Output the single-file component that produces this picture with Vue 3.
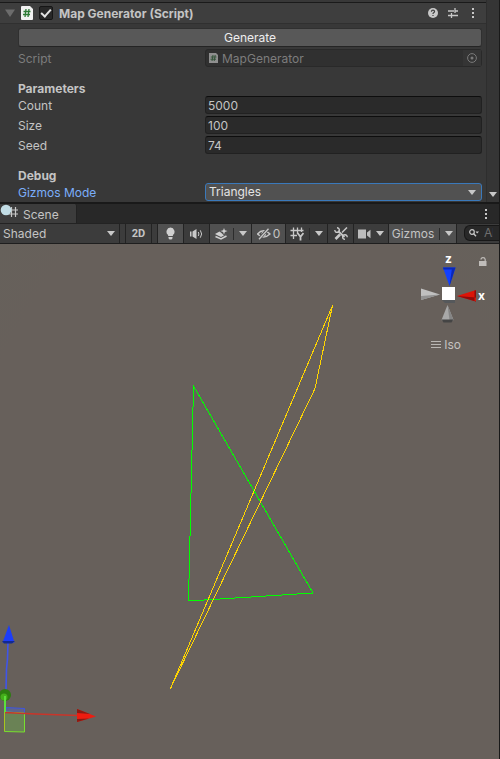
<script setup>
import { ref } from 'vue'

const enabled = ref(true)
const open = ref(true)
const gizmosMode = ref('Triangles')
const shading = ref('Shaded')
const search = ref('')
const fields = ref([
  { id: 'count', label: 'Count', value: '5000' },
  { id: 'size', label: 'Size', value: '100' },
  { id: 'seed', label: 'Seed', value: '74' },
])
</script>

<template>
  <div class="editor">
    <section class="inspector">
      <div class="panel">
        <header class="component-head">
          <button class="fold" aria-label="Toggle component" @click="open = !open">
            <svg width="10" height="8" viewBox="0 0 10 8"><path d="M0 0.5H10L5 8Z" fill="#6c6c6c" /></svg>
          </button>
          <svg class="file" width="12" height="14" viewBox="0 0 12 14">
            <path d="M1 0H9L12 3V13Q12 14 11 14H1Q0 14 0 13V1Q0 0 1 0Z" fill="#f1f1f1" />
            <path d="M5 3L4 11M8 3L7 11M2.5 5.5H9.5M2 8.5H9" stroke="#2d7a35" stroke-width="1.3" />
          </svg>
          <input id="enabled" v-model="enabled" class="check" type="checkbox" />
          <label class="title" for="enabled">Map Generator (Script)</label>
          <div class="head-actions">
            <button aria-label="Help">
              <svg width="10" height="10" viewBox="0 0 10 10">
                <circle cx="5" cy="5" r="5" fill="#c8c8c8" />
                <path d="M3.4 3.8Q3.5 2.2 5 2.2T6.6 3.6Q6.6 4.4 5.6 4.8Q5 5.1 5 6M5 6.9V8.1" fill="none" stroke="#3e3e3e" stroke-width="1.2" />
              </svg>
            </button>
            <button aria-label="Presets">
              <svg width="10" height="10" viewBox="0 0 10 10">
                <path d="M0 3H6M7 3H10M7 0V5M0 7.500H3M4 7.500H10M3.500 5V10" stroke="#c8c8c8" stroke-width="1.3" />
              </svg>
            </button>
            <button aria-label="Component menu">
              <svg width="10" height="10" viewBox="0 0 10 10"><path d="M4 0h2v2H4zM4 4h2v2H4zM4 8h2v2H4z" fill="#c8c8c8" /></svg>
            </button>
          </div>
        </header>

        <div v-if="open" class="props">
          <button class="generate">Generate</button>
          <div class="row muted">
            <span class="name">Script</span>
            <div class="object-field">
              <svg width="9" height="10" viewBox="0 0 9 10">
                <path d="M0 0H7L9 2V10H0Z" fill="#8f8f8f" />
                <path d="M4 2L3 8M6.2 2L5.2 8M1.8 4H7.4M1.5 6.2H7" stroke="#35543a" stroke-width="1" />
              </svg>
              <span class="name">MapGenerator</span>
              <button class="picker" aria-label="Select script">
                <svg width="10" height="10" viewBox="0 0 10 10">
                  <circle cx="5" cy="5" r="4.4" fill="none" stroke="#7a7a7a" />
                  <circle cx="5" cy="5" r="1.5" fill="#7a7a7a" />
                </svg>
              </button>
            </div>
          </div>

          <h2>Parameters</h2>
          <div v-for="f in fields" :key="f.id" class="row">
            <label class="name" :for="f.id">{{ f.label }}</label>
            <input :id="f.id" v-model="f.value" class="number" type="text" />
          </div>

          <h2>Debug</h2>
          <div class="row focused">
            <label class="name" for="mode">Gizmos Mode</label>
            <div class="mode-wrap">
              <select id="mode" v-model="gizmosMode"><option>Triangles</option></select>
              <svg width="8" height="5" viewBox="0 0 8 5"><path d="M0 0H8L4 5Z" fill="#c8c8c8" /></svg>
            </div>
          </div>
        </div>
      </div>
      <div class="scrollbar">
        <svg width="8" height="5" viewBox="0 0 8 5"><path d="M0 0H8L4 5Z" fill="#c8c8c8" /></svg>
      </div>
    </section>

    <nav class="tabs">
      <button class="tab">
        <svg width="18" height="14" viewBox="0 0 18 14">
          <path d="M11.500 3V13M15.500 3V13M8 6H18M8 10H18" stroke="#c8c8c8" stroke-width="1.2" />
          <circle cx="6" cy="6" r="5.3" fill="#c1dce5" />
        </svg>
        <span class="name">Scene</span>
      </button>
      <button class="tab-menu" aria-label="Tab menu">
        <svg width="2" height="10" viewBox="0 0 2 10"><path d="M0 0h2v2H0zM0 4h2v2H0zM0 8h2v2H0z" fill="#c8c8c8" /></svg>
      </button>
    </nav>

    <div class="toolbar">
      <div class="tool shade">
        <select v-model="shading" aria-label="Draw mode"><option>Shaded</option></select>
        <svg width="8" height="5" viewBox="0 0 8 5"><path d="M0 0H8L4 5Z" fill="#c8c8c8" /></svg>
      </div>
      <button class="tool two-d">2D</button>
      <button class="tool on light" aria-label="Scene lighting">
        <svg width="10" height="13" viewBox="0 0 10 13">
          <path d="M4.500 0.5A4.2 4.2 0 0 0 2.100 8V9H6.900V8A4.2 4.2 0 0 0 4.500 0.5Z M2.500 10H6.500V11Q6.500 12.5 4.500 12.5T2.500 11Z" fill="#d0d0d0" />
        </svg>
      </button>
      <button class="tool audio" aria-label="Scene audio">
        <svg width="13" height="12" viewBox="0 0 13 12">
          <path d="M0 3.5H1.5V8.5H0ZM2.5 3.5L6.5 1V11L2.5 8.5Z" fill="#c8c8c8" />
          <path d="M8.3 4Q9.5 6 8.3 8M10.3 2.3Q13 6 10.3 9.7" fill="none" stroke="#c8c8c8" />
        </svg>
      </button>
      <button class="tool on split effects" aria-label="Effects">
        <svg width="13" height="12" viewBox="0 0 13 12">
          <path d="M9 0L9.900 2.200L12.500 3L9.900 3.900L9 6.500L8.100 3.900L5.500 3L8.100 2.200Z" fill="#d0d0d0" />
          <path d="M0 6L4.500 3.500L7 5.500L9 7.500L11.500 6L6 9Z" fill="#d0d0d0" />
          <path d="M0.500 8.500L6 11L11.500 8" fill="none" stroke="#d0d0d0" stroke-width="1.500" />
        </svg>
        <i></i>
        <svg width="8" height="5" viewBox="0 0 8 5"><path d="M0 0H8L4 5Z" fill="#c8c8c8" /></svg>
      </button>
      <button class="tool on hidden-count" aria-label="Hidden objects">
        <svg width="14" height="12" viewBox="0 0 14 12">
          <path d="M0.5 6Q6.5 -0.5 13 6Q6.5 12 0.5 6Z" fill="none" stroke="#c8c8c8" stroke-width="1.4" />
          <circle cx="6.8" cy="6" r="2.4" fill="#c8c8c8" />
          <path d="M2 11L11.5 0.5" stroke="#505050" stroke-width="3" />
          <path d="M2 11.3L11.5 0.8" stroke="#c8c8c8" stroke-width="1.3" />
        </svg>
        <span>0</span>
      </button>
      <button class="tool split grid" aria-label="Grid">
        <svg width="14" height="14" viewBox="0 0 14 14">
          <path d="M3.500 0.5V12M7.500 0.5V7M11.500 0.500V5M0.5 3.5H13.500M0.5 8.500H7" stroke="#c8c8c8" stroke-width="1.3" />
          <path d="M7.500 6L10.500 9.800L13.500 6M10.500 9V13.500" fill="none" stroke="#c8c8c8" stroke-width="1.800" />
        </svg>
        <i></i>
        <svg width="8" height="5" viewBox="0 0 8 5"><path d="M0 0H8L4 5Z" fill="#c8c8c8" /></svg>
      </button>
      <button class="tool tools" aria-label="Component tools">
        <svg width="14" height="13" viewBox="0 0 14 13">
          <path d="M4 4L10.500 10" stroke="#c8c8c8" stroke-width="1.800" />
          <path d="M0.800 3A2.300 2.300 0 1 0 3 0.800M13.200 10.200A2.300 2.300 0 1 0 11 12.300" fill="none" stroke="#c8c8c8" stroke-width="1.400" />
          <path d="M13 0.500L8 5.500" stroke="#c8c8c8" stroke-width="1.500" />
          <path d="M6 7.500L1.500 12" stroke="#c8c8c8" stroke-width="2.600" />
        </svg>
      </button>
      <button class="tool camera" aria-label="Scene camera">
        <svg width="13" height="10" viewBox="0 0 13 10"><path d="M0 0.5H8V9.5H0ZM9 3.5L12.5 0.8V9.2L9 6.5Z" fill="#bdbdbd" /></svg>
        <svg width="8" height="5" viewBox="0 0 8 5"><path d="M0 0H8L4 5Z" fill="#c8c8c8" /></svg>
      </button>
      <button class="tool on split gizmos">
        <span>Gizmos</span>
        <i></i>
        <svg width="8" height="5" viewBox="0 0 8 5"><path d="M0 0H8L4 5Z" fill="#c8c8c8" /></svg>
      </button>
      <label class="search">
        <svg width="10" height="8" viewBox="0 0 10 8">
          <circle cx="3" cy="3" r="2.3" fill="none" stroke="#c8c8c8" stroke-width="1.2" />
          <path d="M4.7 4.7L7 7.3" stroke="#c8c8c8" stroke-width="1.3" />
          <path d="M6.5 2.5H10L8.2 4.6Z" fill="#c8c8c8" />
        </svg>
        <input v-model="search" type="text" placeholder="All" aria-label="Search scene" />
      </label>
    </div>

    <main class="scene">
      <svg class="canvas" width="499" height="515" viewBox="0 0 499 515">
        <g fill="none" shape-rendering="crispEdges">
          <path d="M193.500 142L313 349L188.500 357Z" stroke="#00ff00" />
          <path d="M332.500 61.500L315 144.500L170.500 444.500Z" stroke="#ffd500" />
        </g>
        <path d="M6 463.500L24.500 464.500V469L6 468Z" fill="#5566bb" fill-opacity="0.5" stroke="#3f55e0" />
        <path d="M4.500 468L24.500 469V488L4.500 487.500Z" fill="#6d9a52" fill-opacity="0.6" stroke="#78e02e" />
        <path d="M8 398L7.500 415L6.500 425L6 446" fill="none" stroke="#3f55ea" stroke-width="1.600" />
        <path d="M5 468.500L36 470L78 471.500" fill="none" stroke="#c9352a" stroke-width="1.600" />
        <circle cx="5" cy="451" r="6" fill="#2d7d10" />
        <circle cx="4" cy="453" r="3.500" fill="#45ad1b" />
        <path d="M5 452V468" stroke="#5ce03a" stroke-width="2" />
        <path d="M4.500 469V487" stroke="#a7c61e" />
        <path d="M9 381L14.500 398.500H2.500Z" fill="#1c3dfa" />
        <path d="M2 397H15L12 399.500H4Z" fill="#132a90" />
        <path d="M77 465L96 472.500L77 478Z" fill="#ee1c10" />
        <path d="M77 465L90 470L77 469Z M77 478L89 474.500L77 475Z" fill="#8c1a12" />
      </svg>

      <div class="axes">
        <svg width="72" height="76" viewBox="0 0 72 76">
          <path d="M23 17.500H35.500L29.500 36Z" fill="#1240ff" />
          <path d="M23 17.500H35.500L35 19.500H23.500ZM35.500 17.500L29.500 36L32 18Z" fill="#0a28b8" />
          <path d="M1 38.500L20 44.500L1 50Z" fill="#c0c0c0" />
          <path d="M1 46L20 44.500L1 50Z" fill="#929292" />
          <path d="M56 40L37 46L56 51.500Z" fill="#dc1408" />
          <path d="M56 47.500L37 46L56 51.500ZM54.500 40.500H56V51H54.500Z" fill="#8e0b0b" />
          <path d="M27.500 55L33.500 70L31 72H24L21.500 70Z" fill="#a8a8a8" />
          <path d="M27.500 55L33.500 70H29.500Z" fill="#858585" />
          <path d="M21.500 69.500H33.500L31.500 72.500H23.500Z" fill="#444" />
          <path d="M22 50H35V53H25Z" fill="#55585b" />
          <path d="M22 37H35V50H22Z" fill="#fff" />
          <text x="25" y="13">z</text>
          <text x="58" y="50">x</text>
        </svg>
        <button class="lock" aria-label="Lock view rotation">
          <svg width="8" height="9" viewBox="0 0 8 9">
            <path d="M0 4H7.500V9H0Z" fill="#c0bdba" />
            <path d="M2 2.500Q2 0.700 4 0.700T6.200 2.500V5" fill="none" stroke="#c0bdba" stroke-width="1.200" />
          </svg>
        </button>
      </div>
      <button class="iso">
        <svg width="10" height="8" viewBox="0 0 10 8"><path d="M0 0.500H10M0 3.500H10M0 6.500H10" stroke="#b9b6b3" /></svg>
        <span>Iso</span>
      </button>
    </main>
  </div>
</template>

<style>
body {
  margin: 0;
  background: #191919;
}
</style>

<style scoped>
.editor,
.editor * {
  box-sizing: border-box;
}
.editor {
  display: flex;
  flex-direction: column;
  min-height: 100vh;
  overflow: hidden;
  padding-right: 1px;
  background: #191919;
  color: #c4c4c4;
  font: 12px/16px Inter, "Noto Sans", sans-serif;
}
button,
input,
select {
  margin: 0;
  padding: 0;
  border: 0;
  background: none;
  color: inherit;
  font: inherit;
}
select {
  appearance: none;
  outline: none;
}
svg {
  display: block;
  flex: none;
}
.inspector {
  display: flex;
  background: #383838;
}
.panel {
  flex: 1;
  min-width: 0;
}
.component-head {
  display: flex;
  align-items: center;
  height: 24px;
  padding: 3px 8px 0 5px;
  background: linear-gradient(#383838 2px, #1a1a1a 2px, #1a1a1a 3px, #3e3e3e 3px);
  border-bottom: 1px solid #303030;
}
.file {
  margin: 0 6px;
}
.check {
  display: grid;
  place-items: center;
  width: 14px;
  height: 14px;
  appearance: none;
  background: #282828;
  border: 1px solid #161616;
  border-radius: 2px;
}
.check:checked::after {
  content: "";
  width: 4px;
  height: 8px;
  margin-bottom: 2px;
  border: solid #e4e4e4;
  border-width: 0 2px 2px 0;
  transform: rotate(42deg);
}
.title {
  margin-left: 6px;
  padding-top: 2px;
  font-weight: 700;
}
.head-actions {
  display: flex;
  gap: 10px;
  margin-left: auto;
}
.props {
  padding: 4px 4px 1px 18px;
}
.generate {
  display: block;
  width: 100%;
  height: 19px;
  margin-bottom: 2px;
  background: #585858;
  border: 1px solid #303030;
  border-bottom-color: #242424;
  border-radius: 3px;
  color: #eee;
}
.row {
  display: grid;
  grid-template-columns: 187px 1fr;
  align-items: center;
  height: 18px;
}
.row + .row {
  margin-top: 2px;
}
.name {
  padding-top: 2px;
}
.muted {
  color: #7d7d7d;
}
.object-field {
  display: flex;
  align-items: center;
  gap: 4px;
  height: 18px;
  padding-left: 3px;
  background: #303030;
  border: 1px solid #292929;
  border-radius: 3px;
}
.picker {
  display: grid;
  place-items: center;
  width: 18px;
  height: 16px;
  margin-left: auto;
  background: #353535;
}
h2 {
  margin: 14px 0 0;
  font-size: 12px;
  font-weight: 700;
  line-height: 15px;
}
.number {
  width: 100%;
  height: 18px;
  padding: 0 2px;
  background: #2a2a2a;
  border: 1px solid #212121;
  border-top-color: #0d0d0d;
  border-radius: 3px;
}
.focused label {
  color: #7baefa;
}
.mode-wrap {
  display: flex;
  align-items: center;
  height: 18px;
  padding: 0 5px 0 3px;
  background: #515151;
  border: 1px solid #3a79bb;
  border-radius: 3px;
  color: #e4e4e4;
}
.mode-wrap select {
  flex: 1;
}
.scrollbar {
  display: flex;
  align-items: flex-end;
  justify-content: center;
  width: 13px;
  padding-bottom: 5px;
  background: #353535;
  border-left: 1px solid #2e2e2e;
}
.tabs {
  display: flex;
  align-items: center;
  justify-content: space-between;
  height: 21px;
  border-top: 2px solid #191919;
  background: #282828;
}
.tab {
  display: flex;
  align-items: center;
  gap: 5px;
  height: 19px;
  padding: 0 17px 0 0;
  background: #3c3c3c;
  border-right: 1px solid #222;
  border-radius: 0 2px 0 0;
}
.tab svg {
  align-self: flex-start;
}
.tab-menu {
  padding: 0 12px;
}
.toolbar {
  display: flex;
  height: 21px;
  overflow: hidden;
  background: #3c3c3c;
  border-top: 1px solid #232323;
  border-bottom: 1px solid #1e1e1e;
}
.tool {
  display: flex;
  flex: none;
  align-items: center;
  justify-content: center;
  border-right: 1px solid #232323;
}
.on {
  background: #505050;
}
.shade {
  width: 120px;
  padding: 0 4px 0 3px;
}
.shade select {
  flex: 1;
}
.two-d {
  width: 27px;
  margin: 0 5px;
  border-left: 1px solid #232323;
  font-family: Roboto, sans-serif;
  font-size: 11px;
  font-weight: 700;
}
.light {
  width: 27px;
  border-left: 1px solid #232323;
}
.audio {
  width: 26px;
}
.effects {
  width: 42px;
}
.hidden-count {
  gap: 2px;
  width: 34px;
}
.grid {
  width: 42px;
}
.split {
  gap: 5px;
}
.split i {
  width: 1px;
  height: 12px;
  background: #2c2c2c;
}
.tools {
  width: 26px;
}
.camera {
  gap: 5px;
  width: 35px;
}
.gizmos {
  width: 68px;
}
.search {
  display: flex;
  flex: 1;
  align-items: center;
  gap: 5px;
  min-width: 0;
  height: 16px;
  margin: 1px 0 0 7px;
  padding-left: 4px;
  background: #282828;
  border: 1px solid #181818;
  border-right: 0;
  border-radius: 6px 0 0 6px;
}
.search input {
  width: 9px;
  min-width: 0;
}
.search input::placeholder {
  color: #6e6e6e;
  opacity: 1;
}
.scene {
  position: relative;
  flex: 1;
  min-height: 515px;
  overflow: hidden;
  background: radial-gradient(ellipse 70% 100% at 50% 70%, #67605b 85%, #66615b 100%);
}
.axes {
  position: absolute;
  top: 6px;
  right: 7px;
}
.axes text {
  fill: #fff;
  font: 700 12px Inter, sans-serif;
}
.lock {
  position: absolute;
  top: 7px;
  right: 5px;
}
.iso {
  position: absolute;
  top: 93px;
  right: 38px;
  display: flex;
  align-items: center;
  gap: 3px;
  color: #c5c2c0;
}
</style>
